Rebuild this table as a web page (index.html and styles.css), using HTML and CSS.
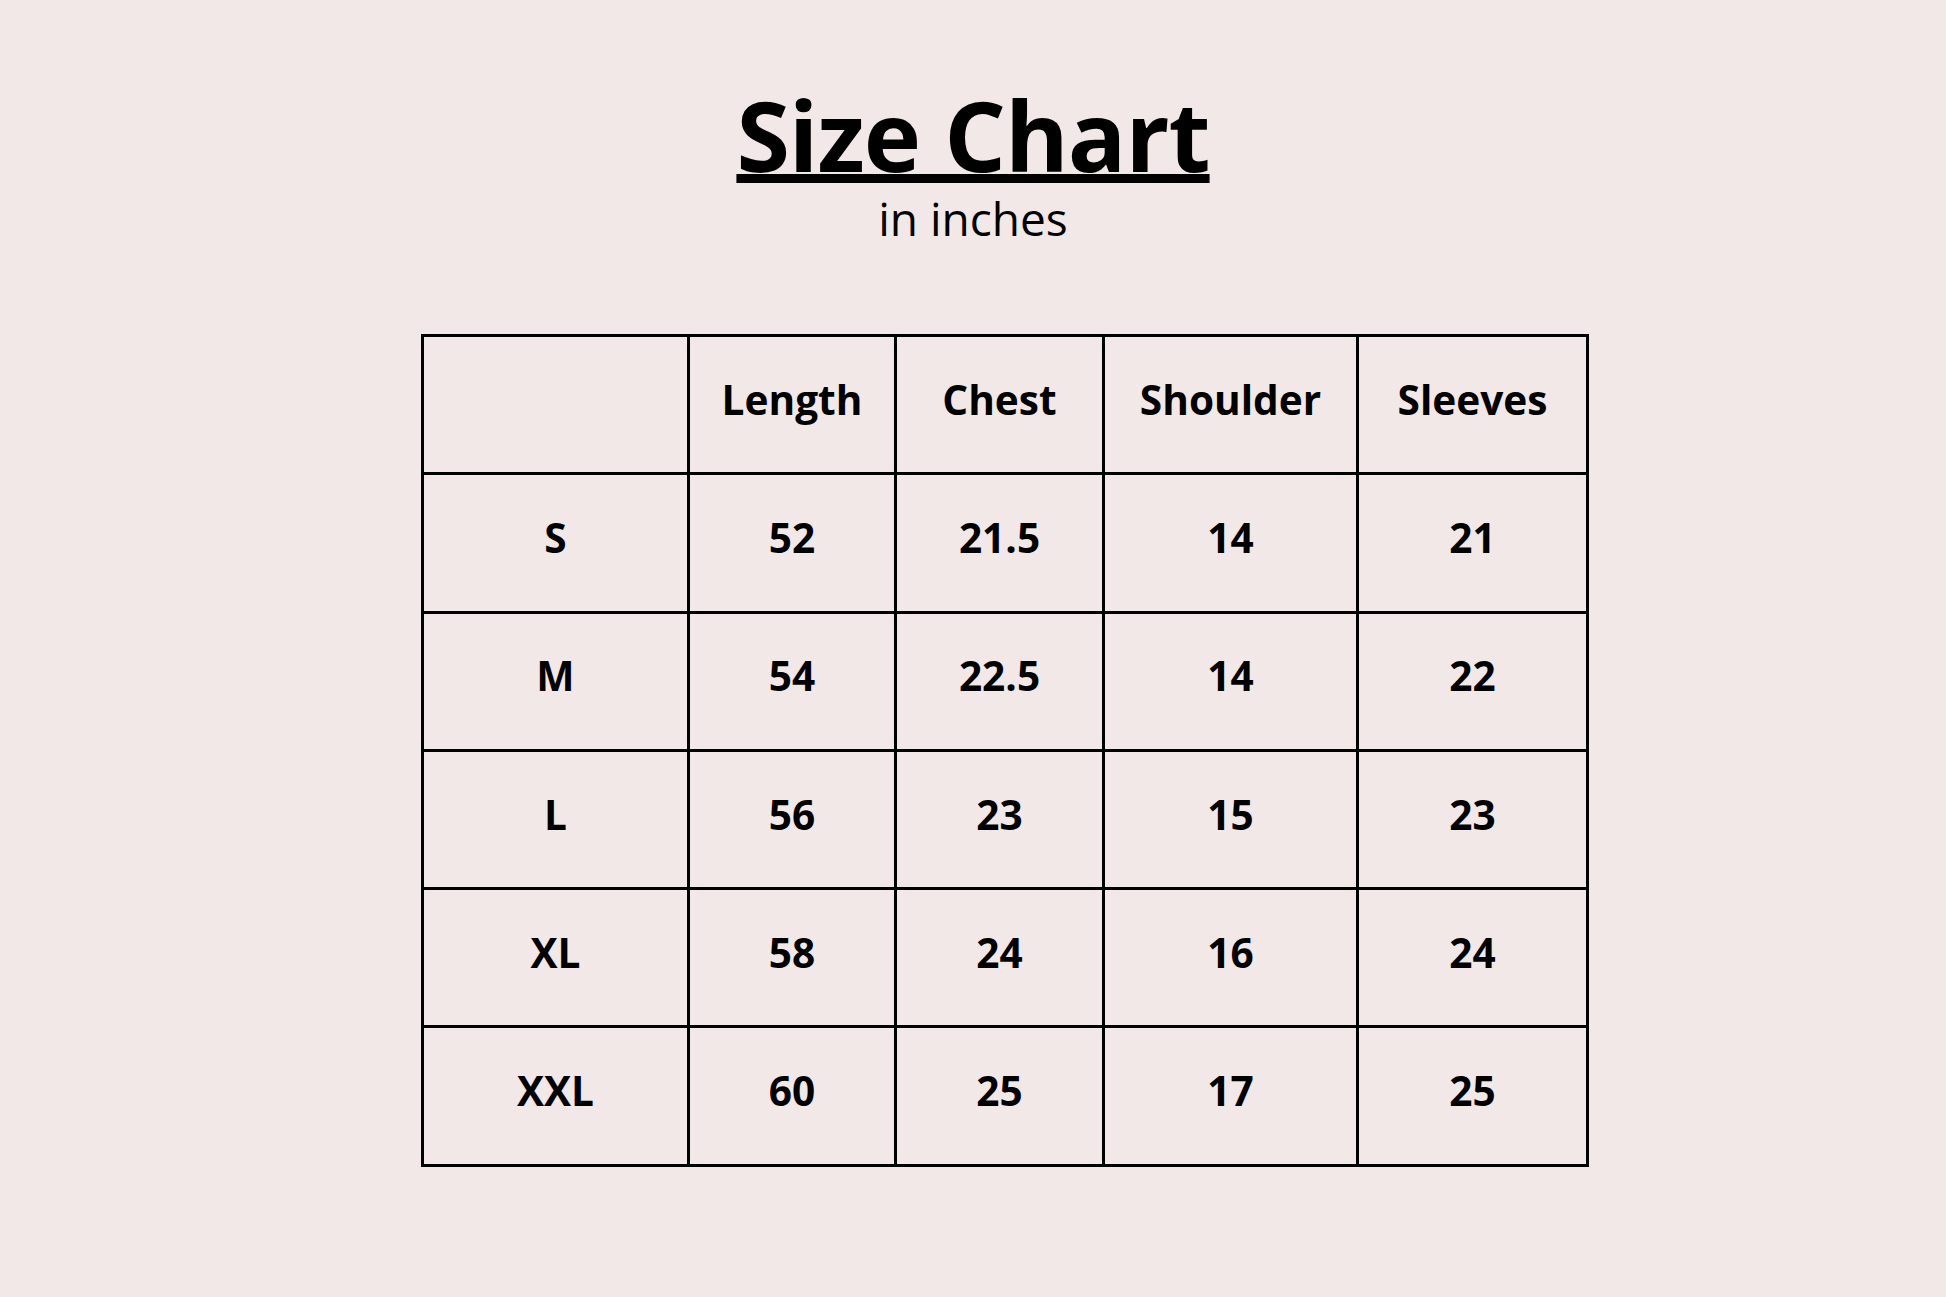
FILE: index.html
```html
<!DOCTYPE html>
<html>
<head>
<meta charset="utf-8">
<link rel="stylesheet" href="styles.css">
</head>
<body>
<main class="page">
  <header class="heading">
    <h1 class="title">Size Chart</h1>
    <p class="subtitle">in inches</p>
  </header>
  <div class="chart">
    <div class="cell"></div>
    <div class="cell">Length</div>
    <div class="cell">Chest</div>
    <div class="cell">Shoulder</div>
    <div class="cell">Sleeves</div>

    <div class="cell">S</div>
    <div class="cell">52</div>
    <div class="cell">21.5</div>
    <div class="cell">14</div>
    <div class="cell">21</div>

    <div class="cell">M</div>
    <div class="cell">54</div>
    <div class="cell">22.5</div>
    <div class="cell">14</div>
    <div class="cell">22</div>

    <div class="cell">L</div>
    <div class="cell">56</div>
    <div class="cell">23</div>
    <div class="cell">15</div>
    <div class="cell">23</div>

    <div class="cell">XL</div>
    <div class="cell">58</div>
    <div class="cell">24</div>
    <div class="cell">16</div>
    <div class="cell">24</div>

    <div class="cell">XXL</div>
    <div class="cell">60</div>
    <div class="cell">25</div>
    <div class="cell">17</div>
    <div class="cell">25</div>
  </div>
</main>
</body>
</html>
```
FILE: styles.css
```css
html, body {
  margin: 0;
  padding: 0;
  background: #f2e8e7;
}
body {
  width: 1946px;
  height: 1297px;
  overflow: hidden;
  font-family: "Open Sans", "Lato", sans-serif;
  color: #000;
}
.page {
  display: flex;
  flex-direction: column;
  padding-top: 84px;
}
.heading {
  display: flex;
  flex-direction: column;
  align-items: center;
}
.title {
  margin: 0;
  font-size: 97px;
  font-weight: 700;
  line-height: 100px;
  letter-spacing: -1px;
  text-decoration: underline;
  text-decoration-thickness: 9px;
  text-underline-offset: 2px;
}
.subtitle {
  margin: 9px 0 0;
  font-size: 46px;
  font-weight: 400;
  line-height: 50px;
}
.chart {
  margin-top: 91px;
  margin-left: 421px;
  width: 1168px;
  display: grid;
  grid-template-columns: 263px 204px 205px 251px 227px;
  grid-auto-rows: 135.3px;
  gap: 3px;
  padding: 3px;
  box-sizing: border-box;
  background: #000;
}
.cell {
  background: #f2e8e7;
  display: flex;
  align-items: center;
  justify-content: center;
  font-size: 40.6px;
  font-weight: 700;
  padding-bottom: 11px;
}
```
